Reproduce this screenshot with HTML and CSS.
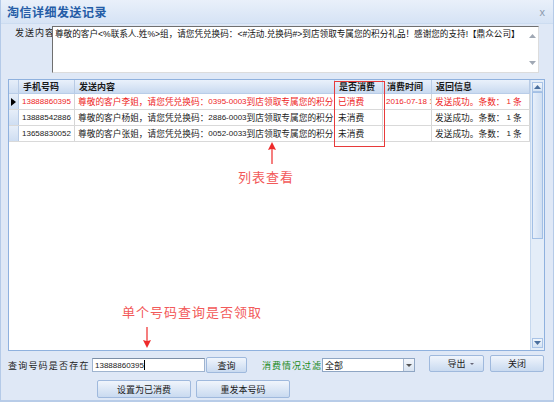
FILE: index.html
```html
<!DOCTYPE html>
<html>
<head>
<meta charset="utf-8">
<link rel="stylesheet" href="styles.css">
</head>
<body>
<div class="window">
  <div class="titlebar">
    <span class="title">淘信详细发送记录</span>
    <span class="close">x</span>
  </div>

  <div class="content-row">
    <div class="content-label">发送内容</div>
    <div class="textarea">
      <div class="ta-text">尊敬的客户&lt;%联系人.姓%&gt;组，请您凭兑换码：&lt;#活动.兑换码#&gt;到店领取专属您的积分礼品！感谢您的支持!【鼎众公司】</div>
      <div class="ta-scroll">
        <svg width="7" height="4" viewBox="0 0 7 4"><path d="M0 4 L3.5 0 L7 4 Z" fill="#a0a8b4"/></svg>
        <svg width="7" height="4" viewBox="0 0 7 4"><path d="M0 0 L3.5 4 L7 0 Z" fill="#a0a8b4"/></svg>
      </div>
    </div>
  </div>

  <div class="grid">
    <div class="grid-body">
      <div class="row header">
        <div class="cell ind"></div>
        <div class="cell c-phone">手机号码</div>
        <div class="cell c-content">发送内容</div>
        <div class="cell c-used">是否消费</div>
        <div class="cell c-time">消费时间</div>
        <div class="cell c-ret">返回信息</div>
      </div>
      <div class="row red">
        <div class="cell ind"><svg width="5" height="8" viewBox="0 0 5 8"><path d="M0 0 L5 4 L0 8 Z" fill="#000"/></svg></div>
        <div class="cell c-phone num">13888860395</div>
        <div class="cell c-content">尊敬的客户李姐，请您凭兑换码：<span class="num">0395-0003</span>到店领取专属您的积分</div>
        <div class="cell c-used">已消费</div>
        <div class="cell c-time num">2016-07-18 1</div>
        <div class="cell c-ret">发送成功。条数： <span class="num">1</span> 条</div>
      </div>
      <div class="row">
        <div class="cell ind"></div>
        <div class="cell c-phone num">13888542886</div>
        <div class="cell c-content">尊敬的客户杨姐，请您凭兑换码：<span class="num">2886-0003</span>到店领取专属您的积分</div>
        <div class="cell c-used">未消费</div>
        <div class="cell c-time"></div>
        <div class="cell c-ret">发送成功。条数： <span class="num">1</span> 条</div>
      </div>
      <div class="row">
        <div class="cell ind"></div>
        <div class="cell c-phone num">13658830052</div>
        <div class="cell c-content">尊敬的客户张姐，请您凭兑换码：<span class="num">0052-0033</span>到店领取专属您的积分</div>
        <div class="cell c-used">未消费</div>
        <div class="cell c-time"></div>
        <div class="cell c-ret">发送成功。条数： <span class="num">1</span> 条</div>
      </div>
    </div>
    <div class="vscroll">
      <div class="sb-btn">
        <svg width="7" height="4" viewBox="0 0 7 4"><path d="M0 4 L3.5 0 L7 4 Z" fill="#4a6f9e"/></svg>
      </div>
      <div class="sb-thumb"></div>
      <div class="sb-track"></div>
      <div class="sb-btn">
        <svg width="7" height="4" viewBox="0 0 7 4"><path d="M0 0 L3.5 4 L7 0 Z" fill="#4a6f9e"/></svg>
      </div>
    </div>
  </div>

  <div class="bar1">
    <div class="lbl query-lbl">查询号码是否存在</div>
    <div class="input">13888860395<span class="caret"></span></div>
    <div class="btn btn-query">查询</div>
    <div class="lbl green-lbl">消费情况过滤</div>
    <div class="select">
      <span class="sel-text">全部</span>
      <span class="sel-btn"><svg width="6" height="3" viewBox="0 0 6 3"><path d="M0 0 L3 3 L6 0 Z" fill="#555"/></svg></span>
    </div>
    <div class="btn btn-export">导出<svg class="dd" width="4" height="2" viewBox="0 0 4 2"><path d="M0 0 L2 2 L4 0 Z" fill="#667"/></svg></div>
    <div class="btn btn-close">关闭</div>
  </div>

  <div class="bar2">
    <div class="btn btn-wide">设置为已消费</div>
    <div class="btn btn-wide">重发本号码</div>
  </div>

  <div class="mark-box"></div>
  <svg class="arrow arrow-up" width="8" height="22" viewBox="0 0 8 22"><path d="M4 0 L8 8 L4.6 7 L4.6 22 L3.4 22 L3.4 7 L0 8 Z" fill="#ee2a2a"/></svg>
  <div class="note note-list">列表查看</div>
  <div class="note note-query">单个号码查询是否领取</div>
  <svg class="arrow arrow-down" width="8" height="21" viewBox="0 0 8 21"><path d="M3.4 0 L4.6 0 L4.6 14 L8 13 L4 21 L0 13 L3.4 14 Z" fill="#ee2a2a"/></svg>
</div>
</body>
</html>
```

FILE: styles.css
```css
* { box-sizing: border-box; }
html, body { margin: 0; padding: 0; }
body {
  font-family: "Liberation Sans", "Noto Sans CJK SC", sans-serif;
  font-size: 9px;
  color: #1a1a1a;
}
.window {
  position: relative;
  width: 554px;
  height: 402px;
  background: #dfe8f6;
  border-left: 1px solid #b4cae8;
  border-right: 1px solid #b4cae8;
  border-bottom: 2px solid #b8cce8;
  overflow: hidden;
}
.titlebar {
  height: 24px;
  display: flex;
  align-items: center;
  justify-content: space-between;
  padding: 0 8px 0 6px;
  background: linear-gradient(#e9f0fa, #d6e3f5);
  border-bottom: 1px solid #ccdcf0;
}
.title {
  font-size: 12px;
  font-weight: bold;
  letter-spacing: 0.5px;
  color: #245ca6;
}
.close {
  font-size: 11px;
  color: #8c9aae;
  font-family: "Liberation Sans", sans-serif;
}
.content-row {
  display: flex;
  margin-top: 2px;
  padding-left: 14px;
  height: 47px;
}
.content-label {
  width: 37px;
  overflow: hidden;
  white-space: nowrap;
  letter-spacing: 1px;
  padding-top: 1px;
  line-height: 12px;
  color: #222;
}
.textarea {
  width: 487px;
  height: 47px;
  background: #fff;
  border-top: 1px solid #6f6f6f;
  border-left: 1px solid #6f6f6f;
  border-right: 1px solid #dcdcdc;
  border-bottom: 1px solid #dcdcdc;
  display: flex;
}
.ta-text {
  flex: 1;
  padding: 1px 2px;
  font-size: 8.6px;
  line-height: 12px;
  white-space: nowrap;
  overflow: hidden;
  color: #111;
}
.ta-scroll {
  width: 12px;
  display: flex;
  flex-direction: column;
  justify-content: space-between;
  align-items: center;
  padding: 7px 0 7px;
}
.grid {
  margin: 6px 0 0 7px;
  width: 537px;
  height: 272px;
  border: 1px solid #8fb1de;
  background: #fff;
  display: flex;
}
.grid-body {
  width: 521px;
  height: 100%;
  background: #fff;
}
.row {
  display: flex;
  height: 16px;
  font-size: 8.7px;
  border-bottom: 1px solid #d9d9d9;
}
.row.header {
  height: 14px;
  font-size: 9px;
  background: linear-gradient(#eaf1fb, #c9daf0);
  border-bottom: 1px solid #b9cde8;
  font-weight: bold;
}
.cell {
  height: 100%;
  display: flex;
  align-items: center;
  padding-left: 3px;
  white-space: nowrap;
  overflow: hidden;
  border-right: 1px solid #d6d6d6;
}
.header .cell { border-right: 1px solid #b8cbe5; padding-left: 4px; }
.ind {
  width: 10px;
  padding-left: 2px;
  background: linear-gradient(#e6eef9, #cfdef2);
  border-right: 1px solid #b8cbe5;
}
.c-phone { width: 56px; }
.c-content { width: 260px; }
.c-used { width: 48px; }
.c-time { width: 49px; }
.c-ret { width: 98px; }
.num { font-size: 8px; }
.c-ret .num { margin: 0 2px; }
.row.red { color: #ee1d24; }
.vscroll {
  width: 14px;
  height: 100%;
  display: flex;
  flex-direction: column;
  background: #e4edf8;
  border-left: 1px solid #c6d8ee;
  padding: 2px 1px;
}
.sb-btn {
  height: 10px;
  display: flex;
  align-items: center;
  justify-content: center;
  background: linear-gradient(#f1f6fc, #d5e3f4);
  border: 1px solid #a9c3e6;
}
.sb-thumb {
  height: 147px;
  background: linear-gradient(90deg, #e7effa, #d0dff2);
  border: 1px solid #a2bfe5;
}
.sb-track { flex: 1; }
.bar1 {
  display: flex;
  align-items: center;
  height: 20px;
  margin-top: 4px;
  padding-left: 7px;
}
.lbl { letter-spacing: 1.2px; white-space: nowrap; }
.query-lbl { width: 84px; color: #222; }
.green-lbl { width: 60px; margin-left: 15px; color: #1a8a1a; letter-spacing: 1px; }
.input {
  width: 113px;
  height: 14px;
  background: #fff;
  border: 1px solid #9fb4cf;
  border-top-color: #7c8ea6;
  font-size: 8px;
  padding-left: 2px;
  display: flex;
  align-items: center;
}
.caret {
  display: inline-block;
  width: 1px;
  height: 10px;
  background: #000;
}
.btn {
  height: 17px;
  display: flex;
  align-items: center;
  justify-content: center;
  background: linear-gradient(#f0f5fc, #c9daf0);
  border: 1px solid #9fb9dd;
  border-radius: 2px;
  color: #1a1a1a;
}
.btn-query { width: 41px; margin-left: 1px; height: 16px; }
.select {
  width: 93px;
  height: 14px;
  background: #fff;
  border: 1px solid #8fa6c4;
  display: flex;
  align-items: center;
  justify-content: space-between;
}
.sel-text { padding-left: 2px; }
.sel-btn {
  width: 11px;
  height: 12px;
  display: flex;
  align-items: center;
  justify-content: center;
  background: linear-gradient(#f3f6fb, #d8e3f1);
  border-left: 1px solid #a8b8cf;
}
.btn-export { width: 55px; margin-left: 14px; margin-top: -3px; position: relative; }
.btn-export .dd { position: absolute; right: 9px; top: 7px; }
.btn-close { width: 54px; margin-left: 6px; margin-top: -3px; }
.bar2 {
  display: flex;
  gap: 5px;
  margin-top: 5px;
  padding-left: 96px;
}
.btn-wide { width: 94px; height: 18px; }

.mark-box {
  position: absolute;
  left: 333px;
  top: 81px;
  width: 51px;
  height: 66px;
  border: 1px solid #e83a3a;
}
.arrow { position: absolute; }
.arrow-up { left: 267px; top: 142px; }
.arrow-down { left: 142px; top: 327px; }
.note {
  position: absolute;
  font-size: 13px;
  line-height: 16px;
  letter-spacing: 1px;
  color: #f25a5a;
  white-space: nowrap;
}
.note-list { left: 237px; top: 170px; }
.note-query { left: 121px; top: 305px; }
```
